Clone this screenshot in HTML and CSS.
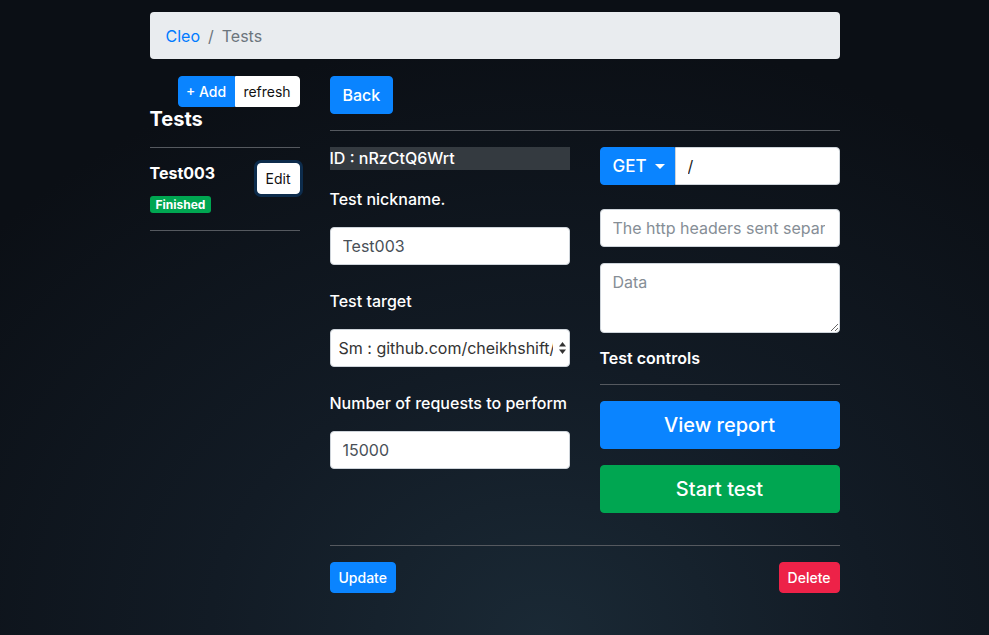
FILE: index.html
```html
<!DOCTYPE html>
<html lang="en">
<head>
<meta charset="utf-8">
<title>Cleo - Tests</title>
<link rel="stylesheet" href="styles.css">
</head>
<body>
<div class="container">
  <nav class="breadcrumb">
    <a class="crumb-link" href="#">Cleo</a>
    <span class="crumb-sep">/</span>
    <span class="crumb-active">Tests</span>
  </nav>

  <div class="main">
    <aside class="sidebar">
      <div class="side-actions">
        <div class="btn-group">
          <button class="btn btn-sm btn-primary grp-left">+ Add</button>
          <button class="btn btn-sm btn-light grp-right">refresh</button>
        </div>
      </div>
      <h4 class="side-title">Tests</h4>
      <hr class="rule">
      <div class="test-item">
        <div class="test-info">
          <div class="test-name">Test003</div>
          <span class="badge">Finished</span>
        </div>
        <button class="btn btn-sm btn-light btn-focus">Edit</button>
      </div>
      <hr class="rule">
    </aside>

    <section class="content">
      <div><button class="btn btn-primary btn-back">Back</button></div>
      <hr class="rule rule-top">
      <div class="form-row">
        <div class="form-col">
          <div class="id-box">ID : nRzCtQ6Wrt</div>
          <div class="form-group">
            <label class="label">Test nickname.</label>
            <input class="form-control" type="text" value="Test003">
          </div>
          <div class="form-group">
            <label class="label">Test target</label>
            <div class="select-wrap">
              <select class="form-control select">
                <option>Sm : github.com/cheikhshift/cleo</option>
              </select>
              <svg class="select-arrows" width="9" height="14" viewBox="0 0 9 14"><path d="M4.5 1 L8 5.5 H1 Z" fill="#333"/><path d="M4.5 13 L8 8.5 H1 Z" fill="#333"/></svg>
            </div>
          </div>
          <div class="form-group">
            <label class="label">Number of requests to perform</label>
            <input class="form-control" type="text" value="15000">
          </div>
        </div>

        <div class="form-col">
          <div class="input-group">
            <button class="btn btn-primary btn-method">GET <span class="caret"></span></button>
            <input class="form-control group-input" type="text" value="/">
          </div>
          <input class="form-control headers" type="text" placeholder="The http headers sent separated by newline">
          <textarea class="form-control data" placeholder="Data"></textarea>
          <div class="controls-title">Test controls</div>
          <hr class="rule rule-controls">
          <button class="btn btn-lg btn-primary btn-block">View report</button>
          <button class="btn btn-lg btn-success btn-block btn-start">Start test</button>
        </div>
      </div>
      <hr class="rule rule-bottom">
      <div class="footer-actions">
        <button class="btn btn-sm btn-primary">Update</button>
        <button class="btn btn-sm btn-danger">Delete</button>
      </div>
    </section>
  </div>
</div>
</body>
</html>
```
FILE: styles.css
```css
* { box-sizing: border-box; }

html, body { height: 100%; }

body {
  margin: 0;
  font-family: "Inter", "Liberation Sans", sans-serif;
  font-size: 16px;
  color: #fff;
  background: radial-gradient(ellipse 75% 95% at 55% 100%, #1a2935 0%, #121b25 45%, #0b0f15 100%);
  background-color: #0b0f15;
}

.container {
  width: 690px;
  margin: 0 auto;
  padding-top: 12px;
}

.breadcrumb {
  height: 47px;
  background: #e9ecef;
  border-radius: 4px;
  display: flex;
  align-items: center;
  padding: 0 16px;
  font-size: 16px;
}
.crumb-link { color: #007bff; text-decoration: none; }
.crumb-sep { color: #6c757d; padding: 0 8px; }
.crumb-active { color: #6c757d; }

.main {
  display: flex;
  gap: 30px;
  margin-top: 17px;
}

.sidebar { width: 150px; flex: none; }
.content { width: 510px; flex: none; }

.btn {
  font-family: inherit;
  border: 1px solid transparent;
  border-radius: 4px;
  font-size: 16px;
  line-height: 24px;
  padding: 6px 12px;
  cursor: pointer;
  color: #fff;
  font-weight: 500;
  white-space: nowrap;
}
.btn-sm { font-size: 14px; line-height: 21px; padding: 4px 8px; height: 31px; }
.btn-lg { font-size: 20px; line-height: 30px; padding: 8px 16px; height: 48px; }
.btn-primary { background: #0a84ff; border-color: #0a84ff; }
.btn-success { background: #00a651; border-color: #00a651; }
.btn-danger { background: #ed2248; border-color: #ed2248; }
.btn-light { background: #fff; border-color: #fff; color: #111; font-weight: 400; }
.btn-block { display: block; width: 100%; }

.side-actions { display: flex; justify-content: flex-end; }
.btn-group { display: flex; }
.grp-left { border-radius: 4px 0 0 4px; padding: 4px 0; width: 57px; }
.grp-right { border-radius: 0 4px 4px 0; padding: 4px 0; width: 65px; }

.side-title {
  margin: 0;
  font-size: 20px;
  line-height: 24px;
  font-weight: 700;
}

.rule {
  border: 0;
  border-top: 1px solid #55595f;
  margin: 16px 0 0;
}

.test-item {
  display: flex;
  justify-content: space-between;
  align-items: flex-start;
  padding: 14px 0 17px;
}
.test-name { font-size: 16px; line-height: 22px; font-weight: 700; }
.badge {
  display: inline-block;
  margin-top: 12px;
  background: #00a651;
  color: #fff;
  font-size: 12px;
  font-weight: 700;
  line-height: 17px;
  height: 17px;
  padding: 0 6px;
  border-radius: 3px;
}
.btn-focus {
  margin: 1px 0 0;
  box-shadow: 0 0 0 3px #0d2c4c;
  height: 31px;
  width: 43px;
  padding: 4px 0;
}
.test-item + .rule { margin-top: 0; }

.btn-back { height: 38px; }
.rule-top { margin: 16px 0 16px; }

.form-row { display: flex; gap: 30px; }
.form-col { width: 240px; flex: none; display: flex; flex-direction: column; }

.id-box {
  background: #343a40;
  height: 23px;
  line-height: 23px;
  font-size: 16px;
  font-weight: 500;
}
.id-box + .form-group { margin-top: 17px; }

.form-group { margin-bottom: 24px; }
.form-group:last-child { margin-bottom: 0; }
.label {
  display: block;
  font-size: 16px;
  line-height: 24px;
  margin-bottom: 16px;
  font-weight: 500;
}

.form-control {
  display: block;
  width: 100%;
  height: 38px;
  padding: 6px 12px;
  font-family: inherit;
  font-size: 16px;
  line-height: 24px;
  color: #495057;
  background: #fff;
  border: 1px solid #ced4da;
  border-radius: 4px;
  margin: 0;
}
.form-control::placeholder { color: #868e96; }

.select-wrap { position: relative; }
.select {
  appearance: none;
  -webkit-appearance: none;
  padding: 6px 16px 6px 8px;
  color: #333;
}
.select-arrows { position: absolute; right: 3px; top: 12px; }

.input-group { display: flex; }
.btn-method {
  width: 75px;
  flex: none;
  height: 38px;
  border-radius: 4px 0 0 4px;
  display: flex;
  align-items: center;
  gap: 8px;
  padding: 0 12px;
  font-size: 17px;
}
.caret {
  width: 0; height: 0;
  border-left: 5px solid transparent;
  border-right: 5px solid transparent;
  border-top: 5px solid #fff;
}
.group-input { border-radius: 0 4px 4px 0; color: #222; }

.headers { margin-top: 24px; padding-right: 14px; }
.data { margin-top: 16px; height: 70px; resize: vertical; }

.controls-title {
  margin-top: 13px;
  font-size: 16px;
  line-height: 24px;
  font-weight: 600;
}
.rule-controls { margin: 14px 0 16px; }
.btn-start { margin-top: 16px; }

.rule-bottom { margin: 32px 0 16px; }

.footer-actions { display: flex; justify-content: space-between; }
```
